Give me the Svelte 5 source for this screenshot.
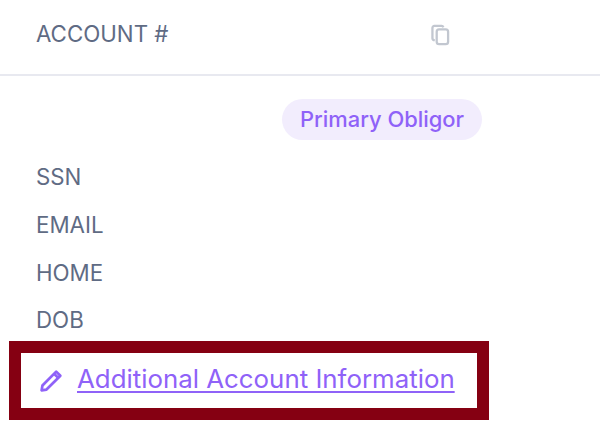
<script>
  const rows = ["SSN", "EMAIL", "HOME", "DOB"];
</script>

<div class="panel">
  <header class="head">
    <span class="label">ACCOUNT #</span>
    <svg class="copy" viewBox="0 0 20 22" width="19" height="22" fill="none" stroke="#c2c7d0" stroke-width="2.400">
      <path d="M4 16.500 H3.500 A2 2 0 0 1 1.500 14.500 V3.500 A2 2 0 0 1 3.500 1.500 H11 A2 2 0 0 1 13 3" />
      <rect x="6" y="5" width="12" height="15.500" rx="2.500" />
    </svg>
  </header>

  <div class="badge-row">
    <span class="badge">Primary Obligor</span>
  </div>

  <ul class="rows">
    {#each rows as row}
      <li class="label">{row}</li>
    {/each}
  </ul>

  <div class="highlight">
    <svg class="pencil" viewBox="0 0 24 24" width="25" height="25" fill="none" stroke="#8f62f8" stroke-width="2.600" stroke-linejoin="round">
      <path d="M2.500 21.500 L3.300 16.800 L16.500 3.500 L20.500 7.500 L7.200 20.700 Z" />
      <path d="M14.500 5.500 L18.500 9.500" />
    </svg>
    <a class="link" href="#info">Additional Account Information</a>
  </div>
</div>

<style>
  :global(body) {
    margin: 0;
    background: #ffffff;
  }

  .panel {
    width: 600px;
    height: 436px;
    overflow: hidden;
    font-family: Inter, "Liberation Sans", sans-serif;
    box-sizing: border-box;
  }

  .head {
    box-sizing: border-box;
    height: 76px;
    display: flex;
    align-items: center;
    padding: 0 0 6px 36px;
    border-bottom: 2px solid #e8e9f0;
  }

  .label {
    font-size: 22.3px;
    line-height: 24px;
    color: #5f6b84;
  }

  .copy {
    margin-left: 263px;
    margin-top: 1px;
  }

  .badge-row {
    display: flex;
    padding: 23px 0 0 282px;
  }

  .badge {
    height: 41px;
    width: 200px;
    display: flex;
    align-items: center;
    justify-content: center;
    border-radius: 21px;
    background: #f2edfd;
    color: #8f62f8;
    font-size: 21.900px;
    font-weight: 500;
    padding-bottom: 2px;
    box-sizing: border-box;
  }

  .rows {
    list-style: none;
    margin: 0;
    padding: 25px 0 0 36px;
    display: flex;
    flex-direction: column;
    gap: 24px;
  }

  .rows li:last-child {
    margin-top: -1px;
  }

  .highlight {
    box-sizing: border-box;
    width: 480px;
    height: 79px;
    margin: 9px 0 0 9px;
    border: 12px solid #850012;
    display: flex;
    align-items: center;
    padding: 0 0 0 18px;
    gap: 13px;
  }

  .link {
    color: #8f62f8;
    font-size: 25.850px;
    line-height: 30px;
    margin-top: -4px;
    text-decoration: underline;
    text-decoration-thickness: 2px;
    text-underline-offset: 3px;
  }
</style>
